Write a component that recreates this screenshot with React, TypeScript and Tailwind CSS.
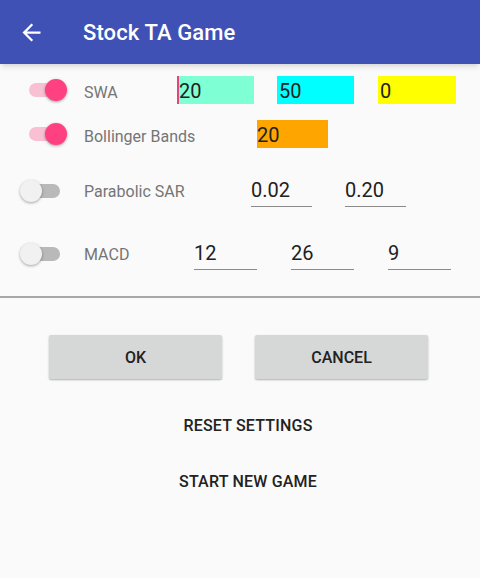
import React from 'react';

const Toggle = ({ on }: { on: boolean }) => (
  <div className="relative w-12 h-6 shrink-0">
    <div
      className={
        'absolute left-[9px] top-[5px] w-[31px] h-[14px] rounded-full ' +
        (on ? 'bg-[#f9c0d4]' : 'bg-[#b9b9b9]')
      }
    />
    <div
      className={
        'absolute top-[1px] w-[22px] h-[22px] rounded-full shadow-[0_1px_3px_rgba(0,0,0,0.35)] ' +
        (on ? 'left-[25px] bg-[#ff4081]' : 'left-0 bg-[#f1f1f1]')
      }
    />
  </div>
);

const Field = ({ value, width }: { value: string; width: string }) => (
  <div className={`${width} h-8 border-b border-[#8a8a8a] flex items-end pb-[4px] text-[20px] leading-[24px] text-[#212121]`}>
    {value}
  </div>
);

const App = () => {
  return (
    <div className="w-[480px] h-[578px] bg-[#fafafa] font-['Roboto',sans-serif] overflow-hidden">
      <header className="h-16 bg-[#3f51b5] flex items-center pl-[18px] shadow-md relative z-10">
        <svg width="27" height="27" viewBox="0 0 24 24" fill="#ffffff">
          <path d="M20 11H7.83l5.59-5.59L12 4l-8 8 8 8 1.41-1.41L7.83 13H20v-2z" />
        </svg>
        <h1 className="ml-[38px] text-white text-[22px] font-medium tracking-[0.1px]">Stock TA Game</h1>
      </header>

      <div className="flex flex-col">
        {/* SWA */}
        <div className="mt-3 h-7 flex items-center pl-5">
          <Toggle on />
          <span className="ml-4 w-[93px] pt-[5px] text-[16px] text-[#757575]">SWA</span>
          <div className="flex gap-6">
            <div className="relative w-[77px] h-7 bg-[#7fffd4] text-[20px] pt-[2px] leading-[26px] text-[#212121] pl-[2px]">
              <span className="absolute left-0 top-0 w-[2px] h-7 bg-[#e0457b]" />
              20
            </div>
            <div className="w-[77px] h-7 bg-[#00ffff] text-[20px] pt-[2px] leading-[26px] text-[#212121] pl-[2px] -ml-[1px]">50</div>
            <div className="w-[78px] h-7 bg-[#ffff00] text-[20px] pt-[2px] leading-[26px] text-[#212121] pl-[2px]">0</div>
          </div>
        </div>

        {/* Bollinger */}
        <div className="mt-4 h-7 flex items-center pl-5">
          <Toggle on />
          <span className="ml-4 w-[173px] pt-[5px] text-[16px] text-[#757575]">Bollinger Bands</span>
          <div className="w-[71px] h-7 bg-[#ffa500] text-[20px] pt-[2px] leading-[26px] text-[#212121]">20</div>
        </div>

        {/* Parabolic SAR */}
        <div className="mt-[27px] h-8 flex items-center pl-5">
          <Toggle on={false} />
          <span className="ml-4 w-[167px] pt-[2px] text-[16px] text-[#757575]">Parabolic SAR</span>
          <div className="flex gap-[33px]">
            <Field value="0.02" width="w-[61px]" />
            <Field value="0.20" width="w-[61px]" />
          </div>
        </div>

        {/* MACD */}
        <div className="mt-[31px] h-8 flex items-center pl-5">
          <Toggle on={false} />
          <span className="ml-4 w-[110px] pt-[2px] text-[16px] text-[#757575]">MACD</span>
          <div className="flex gap-[34px]">
            <Field value="12" width="w-[63px]" />
            <Field value="26" width="w-[63px]" />
            <Field value="9" width="w-[63px]" />
          </div>
        </div>

        <div className="mt-[26px] h-[2px] bg-[#a8a8a8]" />

        <div className="mt-[37px] flex gap-[33px] pl-[49px]">
          <button className="w-[173px] h-11 pt-[2px] bg-[#d6d7d7] rounded-[2px] shadow-[0_1px_2px_rgba(0,0,0,0.3)] text-[16px] font-medium text-[#222]">
            OK
          </button>
          <button className="w-[173px] h-11 pt-[2px] bg-[#d6d7d7] rounded-[2px] shadow-[0_1px_2px_rgba(0,0,0,0.3)] text-[16px] font-medium text-[#222]">
            CANCEL
          </button>
        </div>

        <div className="mt-[23px] flex flex-col gap-2 pl-4">
          <button className="h-12 text-[16px] font-medium text-[#222] tracking-[0.2px]">RESET SETTINGS</button>
          <button className="h-12 text-[16px] font-medium text-[#222] tracking-[0.2px]">START NEW GAME</button>
        </div>
      </div>
    </div>
  );
};

export default App;
